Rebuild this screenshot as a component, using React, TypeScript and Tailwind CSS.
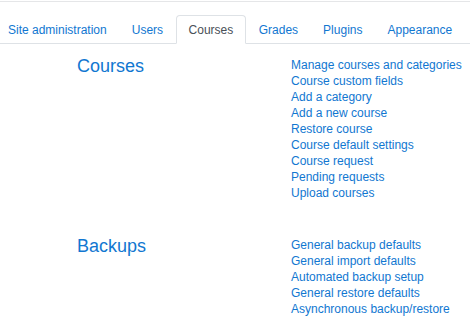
const tabs = ["Site administration", "Users", "Courses", "Grades", "Plugins", "Appearance"];

const sections = [
  {
    title: "Courses",
    links: [
      "Manage courses and categories",
      "Course custom fields",
      "Add a category",
      "Add a new course",
      "Restore course",
      "Course default settings",
      "Course request",
      "Pending requests",
      "Upload courses",
    ],
  },
  {
    title: "Backups",
    links: [
      "General backup defaults",
      "General import defaults",
      "Automated backup setup",
      "General restore defaults",
      "Asynchronous backup/restore",
    ],
  },
];

export default function App() {
  return (
    <div className="h-[326px] w-[470px] overflow-hidden bg-white font-['Liberation_Sans',sans-serif]">
      <div className="mt-px border-t border-[#e5e6e8] pt-[13px]">
        <ul className="flex border-b border-[#dee2e6] pl-0">
          {tabs.map((tab, i) => (
            <li key={tab} className="-mb-px shrink-0">
              {tab === "Courses" ? (
                <span className="block whitespace-nowrap rounded-t border border-[#dee2e6] border-b-white bg-white px-[12px] pb-[3px] pt-[4px] text-[12px] leading-[20px] text-[#495057]">
                  {tab}
                </span>
              ) : (
                <a
                  className={`block whitespace-nowrap border border-transparent pb-[3px] pt-[4px] text-[12px] leading-[20px] text-[#1177d1] ${
                    i === 0 ? "pl-[7px] pr-[11.5px]" : "px-[11.5px]"
                  }`}
                >
                  {tab}
                </a>
              )}
            </li>
          ))}
        </ul>
      </div>

      <div className="pt-[12px]">
        {sections.map((s) => (
          <div key={s.title} className="mb-[35px] flex">
            <h2 className="w-[291px] shrink-0 pl-[77px] text-[18px] font-light leading-[20px] text-[#1177d1]">
              {s.title}
            </h2>
            <ul className="pt-px">
              {s.links.map((l) => (
                <li key={l} className="whitespace-nowrap text-[12px] leading-[16px] text-[#1177d1]">
                  <a>{l}</a>
                </li>
              ))}
            </ul>
          </div>
        ))}
      </div>
    </div>
  );
}
